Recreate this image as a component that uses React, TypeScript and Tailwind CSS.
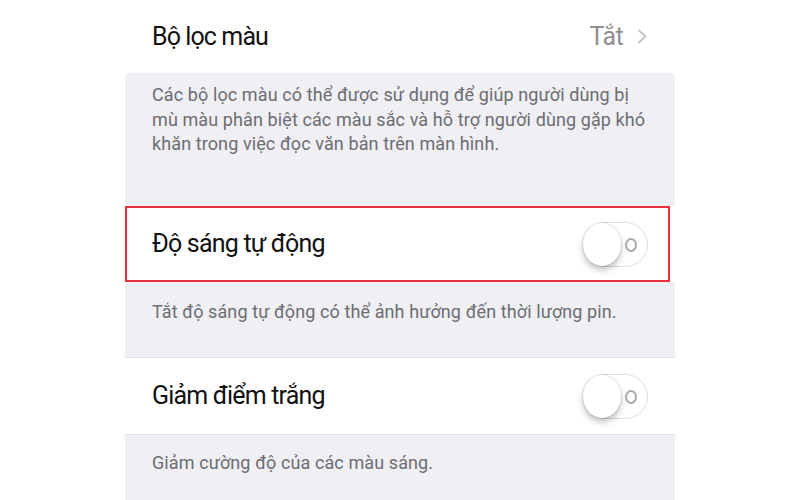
import React from "react";

function Toggle() {
  return (
    <div className="relative h-[45px] w-[65px] rounded-full border border-[#dcdce0] bg-white">
      <div className="absolute left-[-1px] top-[0px] h-[43px] w-[38px] rounded-[50%] bg-white shadow-[0_4px_6px_rgba(0,0,0,0.25),0_0_0_1px_rgba(0,0,0,0.07)]" />
      <div className="absolute left-[41px] top-[15px] h-[14px] w-[12px] rounded-[50%] border-2 border-[#a9a9ae]" />
    </div>
  );
}

function Chevron() {
  return (
    <svg width="11" height="15" viewBox="0 0 11 15" fill="none">
      <path d="M2 1.5 L8.5 7.5 L2 13.5" stroke="#c4c4c9" strokeWidth="2" strokeLinecap="round" strokeLinejoin="round" />
    </svg>
  );
}

export default function App() {
  const font = { fontFamily: "Roboto, 'Noto Sans', sans-serif" };
  return (
    <div className="flex h-[500px] w-[800px] justify-center overflow-hidden bg-white" style={font}>
      <div className="flex w-[550px] flex-col">
        <div className="flex h-[73px] items-center justify-between bg-white pl-[27px] pr-[27px]">
          <span className="text-[25px] tracking-[-0.9px] text-[#111]">Bộ lọc màu</span>
          <div className="flex items-center gap-[14px]">
            <span className="text-[25px] tracking-[-0.6px] text-[#8e8e93]">Tắt</span>
            <Chevron />
          </div>
        </div>

        <div className="h-[133px] bg-[#efeff4] px-[27px] pt-[10px]">
          <p className="whitespace-nowrap text-[18px] leading-[24.5px] tracking-[0.1px] text-[#6d6d72]">
            Các bộ lọc màu có thể được sử dụng để giúp người dùng bị
            <br />
            mù màu phân biệt các màu sắc và hỗ trợ người dùng gặp khó
            <br />
            khăn trong việc đọc văn bản trên màn hình.
          </p>
        </div>

        <div className="relative flex h-[76px] items-center justify-between bg-white pl-[27px] pr-[27px]">
          <span className="text-[25px] tracking-[-0.8px] text-[#111]">Độ sáng tự động</span>
          <Toggle />
          <div className="pointer-events-none absolute bottom-0 left-0 right-[5px] top-0 border-2 border-[#e2323c]" />
        </div>

        <div className="h-[76px] border-b border-[#dedee3] bg-[#efeff4] px-[27px] pt-[18px]">
          <p className="whitespace-nowrap text-[18px] leading-[24.5px] tracking-[0.1px] text-[#6d6d72]">
            Tắt độ sáng tự động có thể ảnh hưởng đến thời lượng pin.
          </p>
        </div>

        <div className="flex h-[76px] items-center justify-between bg-white pl-[27px] pr-[27px]">
          <span className="text-[25px] tracking-[-0.8px] text-[#111]">Giảm điểm trắng</span>
          <Toggle />
        </div>

        <div className="flex-1 border-t border-[#dedee3] bg-[#efeff4] px-[27px] pt-[16px]">
          <p className="whitespace-nowrap text-[18px] leading-[24.5px] tracking-[0.1px] text-[#6d6d72]">
            Giảm cường độ của các màu sáng.
          </p>
        </div>
      </div>
    </div>
  );
}
